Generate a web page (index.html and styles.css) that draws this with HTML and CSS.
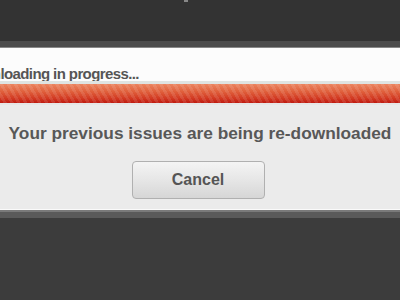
FILE: index.html
```html
<!DOCTYPE html>
<html>
<head>
  <title>Downloading</title>
  <link rel="stylesheet" href="styles.css">
</head>
<body>
  <div class="top"><span class="dot"></span></div>
  <div class="dialog">
    <div class="header">
      <p class="title">Downloading in progress...</p>
    </div>
    <div class="progress"></div>
    <div class="content">
      <p class="message">Your previous issues are being re-downloaded</p>
      <button class="button">Cancel</button>
    </div>
  </div>
  <div class="bottom"></div>
</body>
</html>
```

FILE: styles.css
```css
body {
  margin: 0;
  width: 400px;
  height: 300px;
  overflow: hidden;
  font-family: "Liberation Sans", Arial, sans-serif;
  background-color: #3c3c3c;
}

.top {
  height: 41px;
  background-color: #333333;
  border-bottom: 6px solid #4c4c4c;
  position: relative;
}

.dot {
  position: absolute;
  left: 184px;
  top: 0;
  width: 4px;
  height: 2px;
  background-color: #888;
}

.dialog {
  border-top: 1px solid #888;
}

.header {
  height: 33px;
  background-color: #fcfcfc;
  border-bottom: 3px solid #dfe4e2;
  overflow: hidden;
}

.title {
  margin: 0;
  margin-left: -38px;
  padding-top: 18px;
  font-size: 15px;
  letter-spacing: -0.6px;
  font-weight: bold;
  color: #555;
  line-height: 16px;
  white-space: nowrap;
}

.progress {
  height: 19px;
  background-image:
    repeating-linear-gradient(60deg, rgba(255,255,255,0) 0px, rgba(255,255,255,0) 3px, rgba(255,255,255,0.1) 3px, rgba(255,255,255,0.1) 6px),
    linear-gradient(#eb8560, #e0603c 40%, #d23a22 75%, #bf1a10);
  border-bottom: 2px solid #e6e6e6;
}

.content {
  height: 104px;
  background-color: #ebebeb;
  text-align: center;
  border-bottom: 1px solid #fafafa;
}

.message {
  margin: 0;
  padding-top: 18px;
  font-size: 17.3px;
  font-weight: bold;
  color: #585858;
  line-height: 20px;
  white-space: nowrap;
}

.button {
  margin-top: 18px;
  margin-right: 4px;
  width: 133px;
  height: 38px;
  border: 1px solid #b0b0b0;
  border-radius: 4px;
  background-image: linear-gradient(#f4f4f4, #e6e6e6 50%, #d6d6d6);
  font-family: "Liberation Sans", Arial, sans-serif;
  font-size: 16px;
  font-weight: bold;
  color: #555;
}

.bottom {
  height: 6px;
  background-color: #5a5a5a;
  border-top: 2px solid #7a7a7a;
}
```
